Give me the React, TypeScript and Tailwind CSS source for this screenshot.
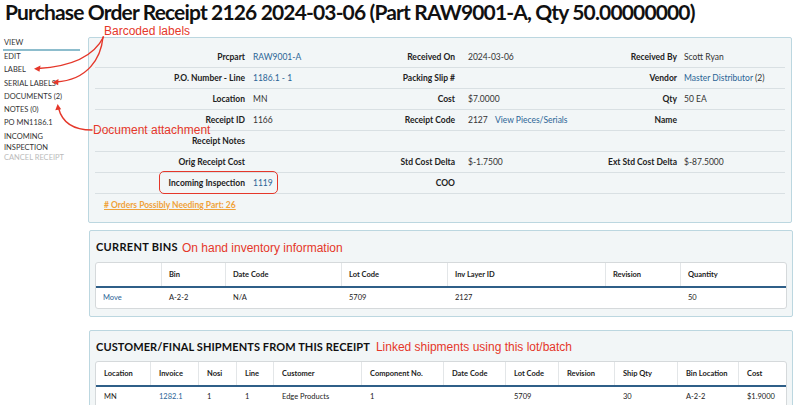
import React from "react";

const RED = "#e5372a";

const rows: [string, React.ReactNode, string, React.ReactNode, string, React.ReactNode][] = [
  ["Prcpart", <span className="text-[#2a6496]">RAW9001-A</span>, "Received On", "2024-03-06", "Received By", "Scott Ryan"],
  ["P.O. Number - Line", <span className="text-[#2a6496]">1186.1 - 1</span>, "Packing Slip #", "", "Vendor", <span><span className="text-[#2a6496]">Master Distributor</span> (2)</span>],
  ["Location", "MN", "Cost", "$7.0000", "Qty", "50 EA"],
  ["Receipt ID", "1166", "Receipt Code", <span>2127 <span className="ml-[5px] text-[#2a6496]">View Pieces/Serials</span></span>, "Name", ""],
  ["Receipt Notes", "", "", "", "", ""],
  ["Orig Receipt Cost", "", "Std Cost Delta", "$-1.7500", "Ext Std Cost Delta", "$-87.5000"],
  ["Incoming Inspection", <span className="text-[#2a6496]">1119</span>, "COO", "", "", ""],
];

const navItems = ["EDIT", "LABEL", "SERIAL LABELS", "DOCUMENTS (2)", "NOTES (0)", "PO MN1186.1"];

function Panel({ children, className = "" }: { children: React.ReactNode; className?: string }) {
  return (
    <div className={"border border-[#bcd7e0] bg-[#f2f6f7] rounded-[2px] " + className}>{children}</div>
  );
}

export default function App() {
  return (
    <div className="relative w-[800px] h-[405px] overflow-hidden bg-white font-['Lato',sans-serif] text-[#222]">
      <div className="h-[37px] pt-[1px]">
        <h1 className="pl-[5px] text-[21px] leading-[22px] font-bold tracking-[-0.85px] text-[#111] whitespace-nowrap">
          Purchase Order Receipt 2126 2024-03-06 (Part RAW9001-A, Qty 50.00000000)
        </h1>
      </div>
      <div className="flex">
        {/* Sidebar */}
        <nav className="w-[88px] shrink-0 pl-[3px] text-[7.5px] text-[#333] uppercase">
          <div className="w-[77px] h-[14px] leading-[12px] pl-[1px] border-b-2 border-[#8dbdcd]">VIEW</div>
          <div className="-mt-[1px]">
            {navItems.map((n) => (
              <div key={n} className="h-[13.3px] leading-[13.3px] pl-[1px]">{n}</div>
            ))}
            <div className="pl-[1px] leading-[11px] pt-[1px]">INCOMING<br />INSPECTION</div>
            <div className="pl-[1px] leading-[10px] text-[#bbb]">CANCEL RECEIPT</div>
          </div>
        </nav>
        {/* Main */}
        <div className="w-[704px] flex flex-col">
          <Panel className="h-[186px] pt-[9px] px-[6px] w-[704px]">
            <div className="text-[8.5px]">
              {rows.map((r, i) => (
                <div key={i} className="grid grid-cols-[150px_110px_100px_122px_100px_106px] h-[21px] items-center border-b border-[#d9e0e3]">
                  <div className="text-right font-bold">{r[0]}</div>
                  <div className="pl-[8px] text-[#333]">{r[1]}</div>
                  <div className="text-right font-bold">{r[2]}</div>
                  <div className="pl-[13px] text-[#333]">{r[3]}</div>
                  <div className="text-right font-bold">{r[4]}</div>
                  <div className="pl-[7px] text-[#333]">{r[5]}</div>
                </div>
              ))}
              <div className="h-[22px] flex items-center pl-[9px]">
                <span className="font-bold underline text-[#f0a23a]">
                  # Orders Possibly Needing Part: 26
                </span>
              </div>
            </div>
          </Panel>

          <Panel className="mt-[7px] ml-[1px] h-[87px] px-[5px] w-[704px]">
            <div className="h-[31px] flex items-center pl-[1px] pt-[2px]">
              <span className="text-[11px] font-bold tracking-[0.3px] text-[#111]">CURRENT BINS</span>
              <span className="ml-[4px] text-[12px] font-['Liberation_Sans',Arial,sans-serif] text-[#e5372a]">On hand inventory information</span>
            </div>
            <div className="bg-white border border-[#d5d9db] rounded-[3px] text-[7.5px]">
              <div className="grid grid-cols-[66px_64px_116px_106px_158px_75px_106px] h-[25px] border-b-2 border-[#2f5f88] font-bold">
                {["", "Bin", "Date Code", "Lot Code", "Inv Layer ID", "Revision", "Quantity"].map((h, i) => (
                  <div key={i} className={"flex items-center px-[7px] " + (i < 6 ? "border-r border-[#e3e6e8]" : "")}>{h}</div>
                ))}
              </div>
              <div className="grid grid-cols-[66px_64px_116px_106px_158px_75px_106px] h-[20px]">
                {[<span className="text-[#2a6496]">Move</span>, "A-2-2", "N/A", "5709", "2127", "", "50"].map((h, i) => (
                  <div key={i} className="flex items-center px-[7px]">{h}</div>
                ))}
              </div>
            </div>
          </Panel>

          <Panel className="mt-[13px] ml-[1px] h-[90px] px-[5px] w-[704px]">
            <div className="h-[30px] flex items-center pl-[1px] pt-[2px]">
              <span className="text-[11px] font-bold tracking-[0.1px] text-[#111]">CUSTOMER/FINAL SHIPMENTS FROM THIS RECEIPT</span>
              <span className="ml-[6px] text-[12px] font-['Liberation_Sans',Arial,sans-serif] text-[#e5372a]">Linked shipments using this lot/batch</span>
            </div>
            <div className="bg-white border border-[#d5d9db] rounded-[3px] text-[7.5px]">
              <div className="grid grid-cols-[55px_48px_38px_37px_88px_82px_62px_53px_56px_63px_61px_48px] h-[25px] border-b-2 border-[#2f5f88] font-bold">
                {["Location", "Invoice", "Nosi", "Line", "Customer", "Component No.", "Date Code", "Lot Code", "Revision", "Ship Qty", "Bin Location", "Cost"].map((h, i) => (
                  <div key={i} className={"flex items-center px-[8px] " + (i < 11 ? "border-r border-[#e3e6e8]" : "")}>{h}</div>
                ))}
              </div>
              <div className="grid grid-cols-[55px_48px_38px_37px_88px_82px_62px_53px_56px_63px_61px_48px] h-[20px]">
                {["MN", <span className="text-[#2a6496]">1282.1</span>, "1", "1", "Edge Products", "1", "", "5709", "", "30", "A-2-2", "$1.9000"].map((h, i) => (
                  <div key={i} className="flex items-center px-[8px]">{h}</div>
                ))}
              </div>
            </div>
          </Panel>
        </div>
      </div>

      {/* Annotations overlay */}
      <div className="absolute left-[104px] top-[24px] text-[12px] leading-[14px] font-['Liberation_Sans',Arial,sans-serif] text-[#e5372a] whitespace-nowrap">
        Barcoded labels
      </div>
      <div className="absolute left-[93px] top-[123px] text-[12px] leading-[14px] font-['Liberation_Sans',Arial,sans-serif] text-[#e5372a] whitespace-nowrap">
        Document attachment
      </div>
      <div className="absolute left-[159px] top-[171px] w-[119px] h-[23px] border-[1.5px] border-[#e5372a] rounded-[5px]" />
      <svg className="absolute left-0 top-0 pointer-events-none" width="800" height="405" viewBox="0 0 800 405">
        <g fill="none" stroke={RED} strokeWidth="1.4" strokeLinecap="round">
          <path d="M103.5 37 C 96 52, 80 66, 38 68.5" />
          <path d="M103 37 C 101 58, 88 80, 56 82" />
          <path d="M92 130 C 72 130, 62 122, 58.5 108" />
        </g>
        <g fill={RED}>
          <path d="M34 68.7 L 40.5 65.6 L 39.5 71.8 Z" />
          <path d="M52.5 82.2 L 58.5 79 L 58.2 85.2 Z" />
          <path d="M57.6 104 L 55.3 110.2 L 61.2 109.2 Z" />
        </g>
      </svg>
    </div>
  );
}
